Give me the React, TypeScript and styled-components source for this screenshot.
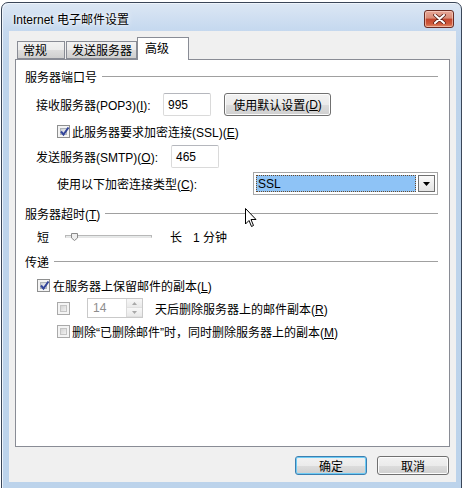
import React from "react";
import styled, { createGlobalStyle } from "styled-components";

const GlobalStyle = createGlobalStyle`
  html, body { margin: 0; padding: 0; background: #ffffff; }
  body {
    font-family: "Liberation Sans", "Noto Sans CJK SC", sans-serif;
    font-size: 12px;
    color: #000;
  }
`;

const Screen = styled.div`
  position: relative;
  width: 463px;
  height: 488px;
  overflow: hidden;
  padding: 2px 0 0 1px;
  box-sizing: border-box;
`;

const Window = styled.div`
  width: 461px;
  height: 494px;
  box-sizing: border-box;
  border: 1px solid #3a4658;
  border-radius: 7px 7px 0 0;
  background: linear-gradient(to bottom, #dce7f4 0, #c6d9ef 26px, #bed4eb 60px, #bcd3eb 100%);
  box-shadow: inset 1px 1px 0 #eef4fb;
  display: flex;
  flex-direction: column;
  padding: 0 5px 0 7px;
`;

const TitleBar = styled.div`
  height: 28px;
  display: flex;
  align-items: flex-start;
  justify-content: space-between;
  padding: 0 2px 0 4px;
`;

const TitleText = styled.div`
  margin-top: 10px;
  font-size: 12px;
  line-height: 15px;
  color: #000;
  text-shadow: 0 0 6px #ffffff, 0 0 3px #ffffff;
`;

const CloseButton = styled.div`
  margin-top: 7px;
  width: 30px;
  height: 18px;
  box-sizing: border-box;
  border: 1px solid #6a2b22;
  border-radius: 3px;
  background: linear-gradient(to bottom, #e8a797 0, #d88b76 45%, #c2442c 50%, #cf5a3c 80%, #e08a66 100%);
  box-shadow: inset 0 0 0 1px rgba(255, 220, 210, 0.55);
  display: flex;
  align-items: center;
  justify-content: center;
`;

const Client = styled.div`
  height: 451px;
  background: #f0f0f0;
  display: flex;
  flex-direction: column;
  padding: 6px 6px 0 6px;
  box-sizing: border-box;
`;

const TabStrip = styled.div`
  height: 22px;
  display: flex;
  align-items: flex-end;
  padding-left: 2px;
  position: relative;
  z-index: 2;
`;

const Tab = styled.div<{ $w: number; $active?: boolean }>`
  width: ${(p) => p.$w}px;
  box-sizing: border-box;
  height: ${(p) => (p.$active ? 23 : 18)}px;
  margin-bottom: ${(p) => (p.$active ? -1 : 0)}px;
  margin-left: ${(p) => (p.$active ? -1 : 0)}px;
  margin-right: ${(p) => (p.$active ? 0 : 1)}px;
  border: 1px solid #898c95;
  border-bottom: ${(p) => (p.$active ? "none" : "1px solid #898c95")};
  background: ${(p) =>
    p.$active ? "#ffffff" : "linear-gradient(to bottom, #f2f2f2 0, #ebebeb 50%, #dddddd 51%, #cfcfcf 100%)"};
  padding-left: ${(p) => (p.$active ? 7 : 5)}px;
  padding-top: ${(p) => (p.$active ? 3 : 1)}px;
  line-height: 16px;
  white-space: nowrap;
`;

const Panel = styled.div`
  height: 388px;
  box-sizing: border-box;
  border: 1px solid #898c95;
  background: #ffffff;
  display: flex;
  flex-direction: column;
  padding: 0 11px 0 0;
  position: relative;
  z-index: 1;
`;

const Section = styled.div<{ $top: number }>`
  height: 22px;
  margin-top: ${(p) => p.$top}px;
  padding-left: 9px;
  display: flex;
  align-items: center;
  gap: 5px;
  white-space: nowrap;
`;

const Rule = styled.div`
  flex: 1;
  height: 1px;
  background: #a0a0a0;
`;

const Row = styled.div<{ $top: number; $h: number; $indent: number }>`
  height: ${(p) => p.$h}px;
  margin-top: ${(p) => p.$top}px;
  padding-left: ${(p) => p.$indent}px;
  display: flex;
  align-items: center;
  white-space: nowrap;
`;

const Label = styled.span<{ $w?: number; $gap?: number }>`
  display: inline-block;
  width: ${(p) => (p.$w ? `${p.$w}px` : "auto")};
  margin-left: ${(p) => p.$gap ?? 0}px;
  flex-shrink: 0;
`;

const TextBox = styled.div<{ $w: number }>`
  width: ${(p) => p.$w}px;
  height: 23px;
  box-sizing: border-box;
  border: 1px solid #dadada;
  border-top-color: #b5b7bd;
  border-radius: 2px;
  background: #fff;
  padding-left: 4px;
  display: flex;
  align-items: center;
  font-size: 12px;
`;

const PushButton = styled.div<{ $w: number; $gap?: number; $default?: boolean }>`
  width: ${(p) => p.$w}px;
  height: ${(p) => (p.$default !== undefined ? 19 : 23)}px;
  margin-left: ${(p) => p.$gap ?? 0}px;
  box-sizing: border-box;
  border: 1px solid ${(p) => (p.$default ? "#3c7fb1" : "#707070")};
  border-radius: 3px;
  background: linear-gradient(to bottom, #f2f2f2 0, #ebebeb 50%, #dddddd 51%, #cfcfcf 100%);
  box-shadow: inset 0 0 0 1px ${(p) => (p.$default ? "#6ecbf4" : "#fcfcfc")};
  display: flex;
  align-items: center;
  justify-content: center;
  white-space: nowrap;
`;

const Select = styled.div`
  width: 186px;
  height: 23px;
  box-sizing: border-box;
  border: 1px solid #a6a6a6;
  background: #ffffff;
  padding: 2px;
  display: flex;
  gap: 2px;
`;

const SelectValue = styled.div`
  flex: 1;
  background: #8ec3f6;
  outline: 1px dotted #6b4a2a;
  outline-offset: -1px;
  padding-left: 2px;
  display: flex;
  align-items: center;
`;

const DropButton = styled.div`
  width: 17px;
  box-sizing: border-box;
  border: 1px solid #707070;
  background: linear-gradient(to bottom, #fafafa, #e4e4e4);
  display: flex;
  align-items: center;
  justify-content: center;
`;

const Track = styled.div`
  position: relative;
  width: 87px;
  height: 3px;
  margin-left: 16px;
  box-sizing: border-box;
  border: 1px solid #b8b8b8;
  border-bottom-color: #e6e6e6;
  background: #e7eaea;
`;

const Thumb = styled.svg`
  position: absolute;
  left: 5px;
  top: -3px;
`;

const Spinner = styled.div`
  width: 56px;
  height: 20px;
  margin-left: 17px;
  box-sizing: border-box;
  border: 1px solid #c9c9c9;
  background: #fff;
  display: flex;
  color: #8d8d8d;
`;

const SpinValue = styled.div`
  flex: 1;
  display: flex;
  align-items: center;
  padding-left: 5px;
`;

const SpinButtons = styled.div`
  width: 15px;
  display: flex;
  flex-direction: column;
  border-left: 1px solid #dadada;
`;

const SpinHalf = styled.div`
  flex: 1;
  background: linear-gradient(to bottom, #f7f7f7, #e9e9e9);
  border-bottom: 1px solid #e0e0e0;
  display: flex;
  align-items: center;
  justify-content: center;
`;

const Box = styled.span<{ $muted?: boolean }>`
  width: 13px;
  height: 13px;
  box-sizing: border-box;
  flex-shrink: 0;
  border: 1px solid ${(p) => (p.$muted ? "#a9a9a9" : "#8e8f8f")};
  background: #f4f4f4;
  padding: 2px;
  display: flex;
  position: relative;
`;

const BoxInner = styled.span<{ $muted?: boolean }>`
  flex: 1;
  border: 1px solid ${(p) => (p.$muted ? "#c4c4c4" : "#aeb3b9")};
  background: ${(p) =>
    p.$muted ? "linear-gradient(135deg, #d4d4d4, #f1f1f1)" : "linear-gradient(135deg, #cbcfd5, #f6f6f6)"};
`;

const Tick = styled.svg`
  position: absolute;
  left: 1px;
  top: 0;
`;

const Footer = styled.div`
  display: flex;
  justify-content: flex-end;
  gap: 10px;
  margin-top: 9px;
  padding-right: 1px;
`;

const Cursor = styled.svg`
  position: absolute;
  left: 245px;
  top: 208px;
  z-index: 10;
`;

const CheckBox = ({ checked, muted }: { checked?: boolean; muted?: boolean }) => (
  <Box $muted={muted}>
    <BoxInner $muted={muted} />
    {checked && (
      <Tick width="11" height="11" viewBox="0 0 11 11">
        <path d="M2 5.5 L4.5 8.5 L9.5 1.5" fill="none" stroke="#33459a" strokeWidth="2" />
      </Tick>
    )}
  </Box>
);

export default function App() {
  return (
    <Screen>
      <GlobalStyle />
      <Window>
        <TitleBar>
          <TitleText>Internet 电子邮件设置</TitleText>
          <CloseButton>
            <svg width="13" height="10" viewBox="0 0 13 10">
              <path d="M2 1 L11 9 M11 1 L2 9" stroke="#5a2018" strokeWidth="3.6" strokeLinecap="round" />
              <path d="M2 1 L11 9 M11 1 L2 9" stroke="#ffffff" strokeWidth="2" strokeLinecap="round" />
            </svg>
          </CloseButton>
        </TitleBar>
        <Client>
          <TabStrip>
            <Tab $w={48}>常规</Tab>
            <Tab $w={71}>发送服务器</Tab>
            <Tab $w={52} $active>
              高级
            </Tab>
          </TabStrip>
          <Panel>
            <Section $top={5}>
              <span>服务器端口号</span>
              <Rule />
            </Section>
            <Row $top={6} $h={23} $indent={20}>
              <Label $w={127}>
                接收服务器(POP3)(<u>I</u>):
              </Label>
              <TextBox $w={48}>995</TextBox>
              <PushButton $w={107} $gap={13}>
                使用默认设置(<u>D</u>)
              </PushButton>
            </Row>
            <Row $top={6} $h={18} $indent={41}>
              <CheckBox checked />
              <Label $gap={2}>
                此服务器要求加密连接(SSL)(<u>E</u>)
              </Label>
            </Row>
            <Row $top={5} $h={23} $indent={20}>
              <Label $w={135}>
                发送服务器(SMTP)(<u>O</u>):
              </Label>
              <TextBox $w={48}>465</TextBox>
            </Row>
            <Row $top={4} $h={23} $indent={41}>
              <Label $w={196}>
                使用以下加密连接类型(<u>C</u>):
              </Label>
              <Select>
                <SelectValue>SSL</SelectValue>
                <DropButton>
                  <svg width="7" height="4" viewBox="0 0 7 4">
                    <path d="M0 0 H7 L3.5 4 Z" fill="#000" />
                  </svg>
                </DropButton>
              </Select>
            </Row>
            <Section $top={7}>
              <span>
                服务器超时(<u>T</u>)
              </span>
              <Rule />
            </Section>
            <Row $top={2} $h={20} $indent={21}>
              <Label>短</Label>
              <Track>
                <Thumb width="7" height="8" viewBox="0 0 7 8">
                  <path d="M0.5 0.5 H6.5 V5 L3.5 7.5 L0.5 5 Z" fill="#eeeeee" stroke="#8a8a8a" />
                </Thumb>
              </Track>
              <Label $gap={18}>长</Label>
              <Label $gap={11}>1 分钟</Label>
            </Row>
            <Section $top={4}>
              <span>传递</span>
              <Rule />
            </Section>
            <Row $top={4} $h={18} $indent={21}>
              <CheckBox checked />
              <Label $gap={3}>
                在服务器上保留邮件的副本(<u>L</u>)
              </Label>
            </Row>
            <Row $top={4} $h={20} $indent={41}>
              <CheckBox muted />
              <Spinner>
                <SpinValue>14</SpinValue>
                <SpinButtons>
                  <SpinHalf>
                    <svg width="5" height="3" viewBox="0 0 5 3">
                      <path d="M0 3 H5 L2.5 0 Z" fill="#a8a8a8" />
                    </svg>
                  </SpinHalf>
                  <SpinHalf>
                    <svg width="5" height="3" viewBox="0 0 5 3">
                      <path d="M0 0 H5 L2.5 3 Z" fill="#a8a8a8" />
                    </svg>
                  </SpinHalf>
                </SpinButtons>
              </Spinner>
              <Label $gap={12}>
                天后删除服务器上的邮件副本(<u>R</u>)
              </Label>
            </Row>
            <Row $top={4} $h={18} $indent={41}>
              <CheckBox muted />
              <Label $gap={2}>
                删除“已删除邮件”时，同时删除服务器上的副本(<u>M</u>)
              </Label>
            </Row>
          </Panel>
          <Footer>
            <PushButton $w={72} $default>
              确定
            </PushButton>
            <PushButton $w={72} $default={false}>
              取消
            </PushButton>
          </Footer>
        </Client>
      </Window>
      <Cursor width="12" height="20" viewBox="0 0 12 20">
        <path d="M0.5 0.5 L0.5 16 L4 12.5 L6.5 18.5 L8.5 17.5 L6 11.5 L11 11.5 Z" fill="#ffffff" stroke="#000" strokeWidth="1" strokeLinejoin="miter" />
      </Cursor>
    </Screen>
  );
}
